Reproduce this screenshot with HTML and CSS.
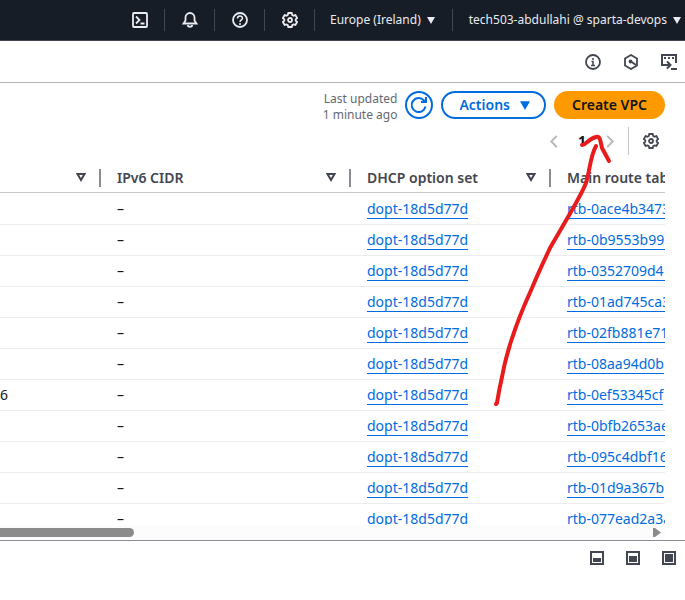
FILE: index.html
```html
<!DOCTYPE html>
<html lang="en">
<head>
<meta charset="utf-8">
<title>Your VPCs</title>
<link rel="stylesheet" href="styles.css">
</head>
<body>
<svg class="defs" aria-hidden="true">
  <symbol id="gear" viewBox="0 0 16 16">
    <path d="M6.300 1h3.400l.5 1.900 1.300.8 1.900-.6 1.700 3-1.400 1.300v1.300l1.400 1.300-1.700 2.900-1.900-.5-1.300.8-.5 1.800H6.300l-.5-1.800-1.300-.8-1.900.5L.9 10l1.400-1.300V7.400L.9 6.100l1.700-3 1.900.6 1.300-.8z"/>
    <circle cx="8" cy="8" r="2"/>
  </symbol>
</svg>

<header class="topbar">
  <button class="top-item" aria-label="CloudShell"><svg class="icon" viewBox="0 0 16 16"><rect x="1" y="1" width="14" height="14" rx="1"/><path d="M4 4.500L7.500 8 4 11.500M8.500 11.500H12.500"/></svg></button>
  <button class="top-item" aria-label="Notifications"><svg class="icon" viewBox="0 0 16 16"><path d="M1.500 11.500h13L12.500 8.500V5.500C12.500 3 10.500 1 8 1S3.500 3 3.500 5.500v3zM6 13v1q2 1.500 4 0v-1"/></svg></button>
  <button class="top-item" aria-label="Help"><svg class="icon" viewBox="0 0 16 16"><circle cx="8" cy="8" r="7"/><path class="fine" d="M5.500 6.500C5.500 3.200 10.500 3.300 10.500 6.200 10.500 8 8 7.800 8 10M8 11v2"/></svg></button>
  <button class="top-item" aria-label="Settings"><svg class="icon"><use href="#gear"/></svg></button>
  <button class="top-item region">Europe (Ireland)<svg class="caret" viewBox="0 0 8 7"><path d="M0 0h8L4 7z"/></svg></button>
  <button class="top-item account">tech503-abdullahi @ sparta-devops<svg class="caret" viewBox="0 0 8 7"><path d="M0 0h8L4 7z"/></svg></button>
</header>

<nav class="toolbar">
  <button aria-label="Info"><svg class="icon" viewBox="0 0 16 16"><circle cx="8" cy="8" r="7"/><path class="fine" d="M8 4v2M6.500 7.500H8v4M6 11.500h4"/></svg></button>
  <button aria-label="Amazon Q"><svg class="icon" viewBox="0 0 16 16"><path d="M8 1l6 3.500v7L8 15l-6-3.500v-7z"/><path d="M8 7.500l5 3.500"/><circle class="solid" cx="7.500" cy="7.500" r="1"/></svg></button>
  <button aria-label="Terminal"><svg class="icon wide" viewBox="0 0 16 16"><path d="M4 11H1V1h14v8M3 4h2M7 4h2M11 4h2M3 11h5.500M6 7.500L9.500 11 6 14.500M10 15h6"/></svg></button>
</nav>

<main class="panel">
  <div class="actions">
    <p class="updated">Last updated<br>1 minute ago</p>
    <button class="refresh" aria-label="Refresh"><svg class="icon" viewBox="0 0 16 16"><path d="M14.500 9.500A7 7 0 1 1 13 3.500L15 5M15 0v5h-5"/></svg></button>
    <button class="btn outline">Actions<svg class="caret" viewBox="0 0 8 7"><path d="M0 0h8L4 7z"/></svg></button>
    <button class="btn primary">Create VPC</button>
  </div>
  <div class="pagination">
    <button class="arrow" aria-label="Previous page"><svg class="chevron" viewBox="0 0 8 14"><path d="M7 1L1 7l6 6"/></svg></button>
    <span class="page">1</span>
    <button class="arrow" aria-label="Next page"><svg class="chevron" viewBox="0 0 8 14"><path d="M1 1l6 6-6 6"/></svg></button>
    <button class="prefs" aria-label="Preferences"><svg class="icon"><use href="#gear"/></svg></button>
  </div>
  <div class="table-scroll">
    <table>
      <colgroup><col class="c-first"><col class="c-ipv6"><col class="c-dhcp"><col></colgroup>
      <thead>
        <tr>
          <th><div class="head"><span></span><svg class="sort" viewBox="0 0 10 9"><path d="M1.500 1h7L5 7z"/></svg></div></th>
          <th><div class="head"><span>IPv6 CIDR</span><svg class="sort" viewBox="0 0 10 9"><path d="M1.500 1h7L5 7z"/></svg></div></th>
          <th><div class="head"><span>DHCP option set</span><svg class="sort" viewBox="0 0 10 9"><path d="M1.500 1h7L5 7z"/></svg></div></th>
          <th>Main route table</th>
        </tr>
      </thead>
      <tbody>
        <tr><td></td><td>–</td><td><a href="#">dopt-18d5d77d</a></td><td><a href="#">rtb-0ace4b3473</a></td></tr>
        <tr><td></td><td>–</td><td><a href="#">dopt-18d5d77d</a></td><td><a href="#">rtb-0b9553b991</a></td></tr>
        <tr><td></td><td>–</td><td><a href="#">dopt-18d5d77d</a></td><td><a href="#">rtb-0352709d41</a></td></tr>
        <tr><td></td><td>–</td><td><a href="#">dopt-18d5d77d</a></td><td><a href="#">rtb-01ad745ca3</a></td></tr>
        <tr><td></td><td>–</td><td><a href="#">dopt-18d5d77d</a></td><td><a href="#">rtb-02fb881e71</a></td></tr>
        <tr><td></td><td>–</td><td><a href="#">dopt-18d5d77d</a></td><td><a href="#">rtb-08aa94d0b</a></td></tr>
        <tr><td class="cut">6</td><td>–</td><td><a href="#">dopt-18d5d77d</a></td><td><a href="#">rtb-0ef53345cf</a></td></tr>
        <tr><td></td><td>–</td><td><a href="#">dopt-18d5d77d</a></td><td><a href="#">rtb-0bfb2653ae</a></td></tr>
        <tr><td></td><td>–</td><td><a href="#">dopt-18d5d77d</a></td><td><a href="#">rtb-095c4dbf16</a></td></tr>
        <tr><td></td><td>–</td><td><a href="#">dopt-18d5d77d</a></td><td><a href="#">rtb-01d9a367b</a></td></tr>
        <tr><td></td><td>–</td><td><a href="#">dopt-18d5d77d</a></td><td><a href="#">rtb-077ead2a3a</a></td></tr>
      </tbody>
    </table>
  </div>
  <div class="scrollbar"><span class="thumb"></span><svg class="scroll-end" viewBox="0 0 8 9"><path d="M0 0h2l6 4.500L2 9H0z"/></svg></div>
</main>

<footer class="split-panel">
  <button aria-label="Small panel"><svg viewBox="0 0 14 14"><rect x="1" y="1" width="12" height="12"/><path d="M3 7h8v4H3z"/></svg></button>
  <button aria-label="Medium panel"><svg viewBox="0 0 14 14"><rect x="1" y="1" width="12" height="12"/><path d="M3 5h8v6H3z"/></svg></button>
  <button aria-label="Large panel"><svg viewBox="0 0 14 14"><rect x="1" y="1" width="12" height="12"/><path d="M3 3h8v8H3z"/></svg></button>
</footer>

<svg class="annotation" viewBox="0 0 120 275" aria-hidden="true">
  <path d="M6 274L7 273Q9 260 12 247Q19 208 42 158C47 146 52 135 60 118L78 87Q92 63 96 53C100 40 100 27 106 16"/>
  <path d="M92 15C95 16 98 9 106 7C110 6 110 9 112 18L119 31"/>
</svg>
</body>
</html>
```
FILE: styles.css
```css
* { box-sizing: border-box; }

body {
  margin: 0;
  height: 100vh;
  display: flex;
  flex-direction: column;
  position: relative;
  overflow: hidden;
  background: #fff;
  color: #0f141a;
  font: 14px/20px "Noto Sans", sans-serif;
}

button {
  margin: 0;
  padding: 0;
  border: 0;
  background: none;
  color: inherit;
  font: inherit;
  display: flex;
  align-items: center;
  justify-content: center;
  white-space: nowrap;
}

.defs { display: none; }

.icon {
  width: 16px;
  height: 16px;
  fill: none;
  stroke: currentColor;
  stroke-width: 1.8;
}
.icon .solid { fill: currentColor; }
.icon .fine { stroke-width: 1.5; }

.caret {
  width: 8px;
  height: 7px;
  fill: currentColor;
}

/* Global navigation */
.topbar {
  flex: none;
  display: flex;
  justify-content: flex-end;
  align-items: center;
  height: 41px;
  background: #161d26;
  border-bottom: 1px solid #424650;
  color: #ebebf0;
  font-size: 12px;
}
.top-item {
  width: 50px;
  height: 22px;
  border-right: 1px solid #424650;
}
.region,
.account {
  width: auto;
  padding: 0 17px 0 15px;
  gap: 6px;
}
.account {
  border: 0;
  padding-left: 16px;
  padding-right: 4px;
}

.toolbar {
  flex: none;
  display: flex;
  justify-content: flex-end;
  align-items: center;
  gap: 22px;
  height: 42px;
  padding-right: 8px;
  border-bottom: 1px solid #b4b4bb;
  color: #424650;
}
.toolbar .wide { stroke-width: 2; }

/* Table panel */
.panel {
  flex: 1;
  min-height: 0;
  display: flex;
  flex-direction: column;
  padding-top: 8px;
}
.actions {
  display: flex;
  justify-content: flex-end;
  gap: 8px;
  padding-right: 20px;
}
.updated {
  margin: 0;
  color: #656871;
  font-size: 12px;
  line-height: 16px;
  text-align: right;
}
.btn {
  height: 28px;
  padding: 0 18px;
  border-radius: 20px;
  font-weight: 600;
}
.refresh {
  width: 28px;
  height: 28px;
  border: 2px solid #006ce0;
  border-radius: 50%;
  color: #006ce0;
}
.refresh .icon { stroke-width: 2; }
.outline {
  gap: 10px;
  padding: 0 14px 0 16px;
  border: 2px solid #006ce0;
  color: #006ce0;
}
.outline .caret {
  width: 10px;
  height: 9px;
}
.primary { background: #ff9900; }

.pagination {
  display: flex;
  justify-content: flex-end;
  align-items: center;
  height: 28px;
  margin-top: 4px;
  padding-right: 20px;
}
.arrow {
  width: 16px;
  height: 20px;
  color: #b4b4bb;
}
.chevron {
  width: 8px;
  height: 13px;
  fill: none;
  stroke: currentColor;
  stroke-width: 2;
}
.page {
  width: 40px;
  text-align: center;
  font-weight: 700;
}
.prefs {
  width: 37px;
  height: 28px;
  margin-left: 10px;
  padding-left: 8px;
  border-left: 1px solid #c6c6cd;
  color: #424650;
}

.table-scroll {
  flex: 1;
  min-height: 0;
  margin: 8px 20px 0 0;
  overflow: hidden;
}
table {
  width: 100%;
  table-layout: fixed;
  border-collapse: separate;
  border-spacing: 0;
}
.c-first { width: 101px; }
.c-ipv6 { width: 250px; }
.c-dhcp { width: 200px; }
th,
td {
  padding: 0 0 0 16px;
  text-align: left;
  white-space: nowrap;
  overflow: hidden;
}
th {
  height: 30px;
  border-bottom: 1px solid #c6c6cd;
  color: #424650;
  font-weight: 600;
}
td {
  height: 31px;
  border-bottom: 1px solid #ebebf0;
}
tbody tr:first-child td {
  height: 32px;
  padding-top: 1px;
}
td.cut { padding-left: 0; }
.head {
  display: flex;
  align-items: center;
  justify-content: space-between;
  height: 18px;
  padding-right: 13px;
  border-right: 2px solid #8c8c94;
}
.sort {
  width: 10px;
  height: 9px;
  fill: none;
  stroke: #424650;
  stroke-width: 2;
}
a {
  display: inline-block;
  height: 20px;
  line-height: 20px;
  border-bottom: 1px solid #006ce0;
  color: #006ce0;
  text-decoration: none;
}

.scrollbar {
  flex: none;
  display: flex;
  align-items: center;
  justify-content: space-between;
  height: 15px;
  margin-right: 20px;
  padding-right: 4px;
  background: #fcfcfc;
}
.thumb {
  width: 134px;
  height: 9px;
  border-radius: 0 5px 5px 0;
  background: #8b8b8b;
}
.scroll-end {
  width: 8px;
  height: 9px;
  fill: #8b8b8b;
}

.split-panel {
  flex: none;
  display: flex;
  justify-content: flex-end;
  align-items: flex-start;
  gap: 22px;
  height: 60px;
  padding: 10px 9px 0 0;
  border-top: 1px solid #8c8c94;
}
.split-panel svg {
  width: 14px;
  height: 14px;
}
.split-panel rect {
  fill: none;
  stroke: #424650;
  stroke-width: 2;
}
.split-panel path { fill: #424650; }

/* Hand-drawn arrow over the page */
.annotation {
  position: absolute;
  top: 130px;
  right: 75px;
  width: 120px;
  height: 275px;
  overflow: visible;
  fill: none;
  stroke: #e81c1c;
  stroke-width: 4;
  stroke-linecap: round;
  stroke-linejoin: round;
  pointer-events: none;
}
```
